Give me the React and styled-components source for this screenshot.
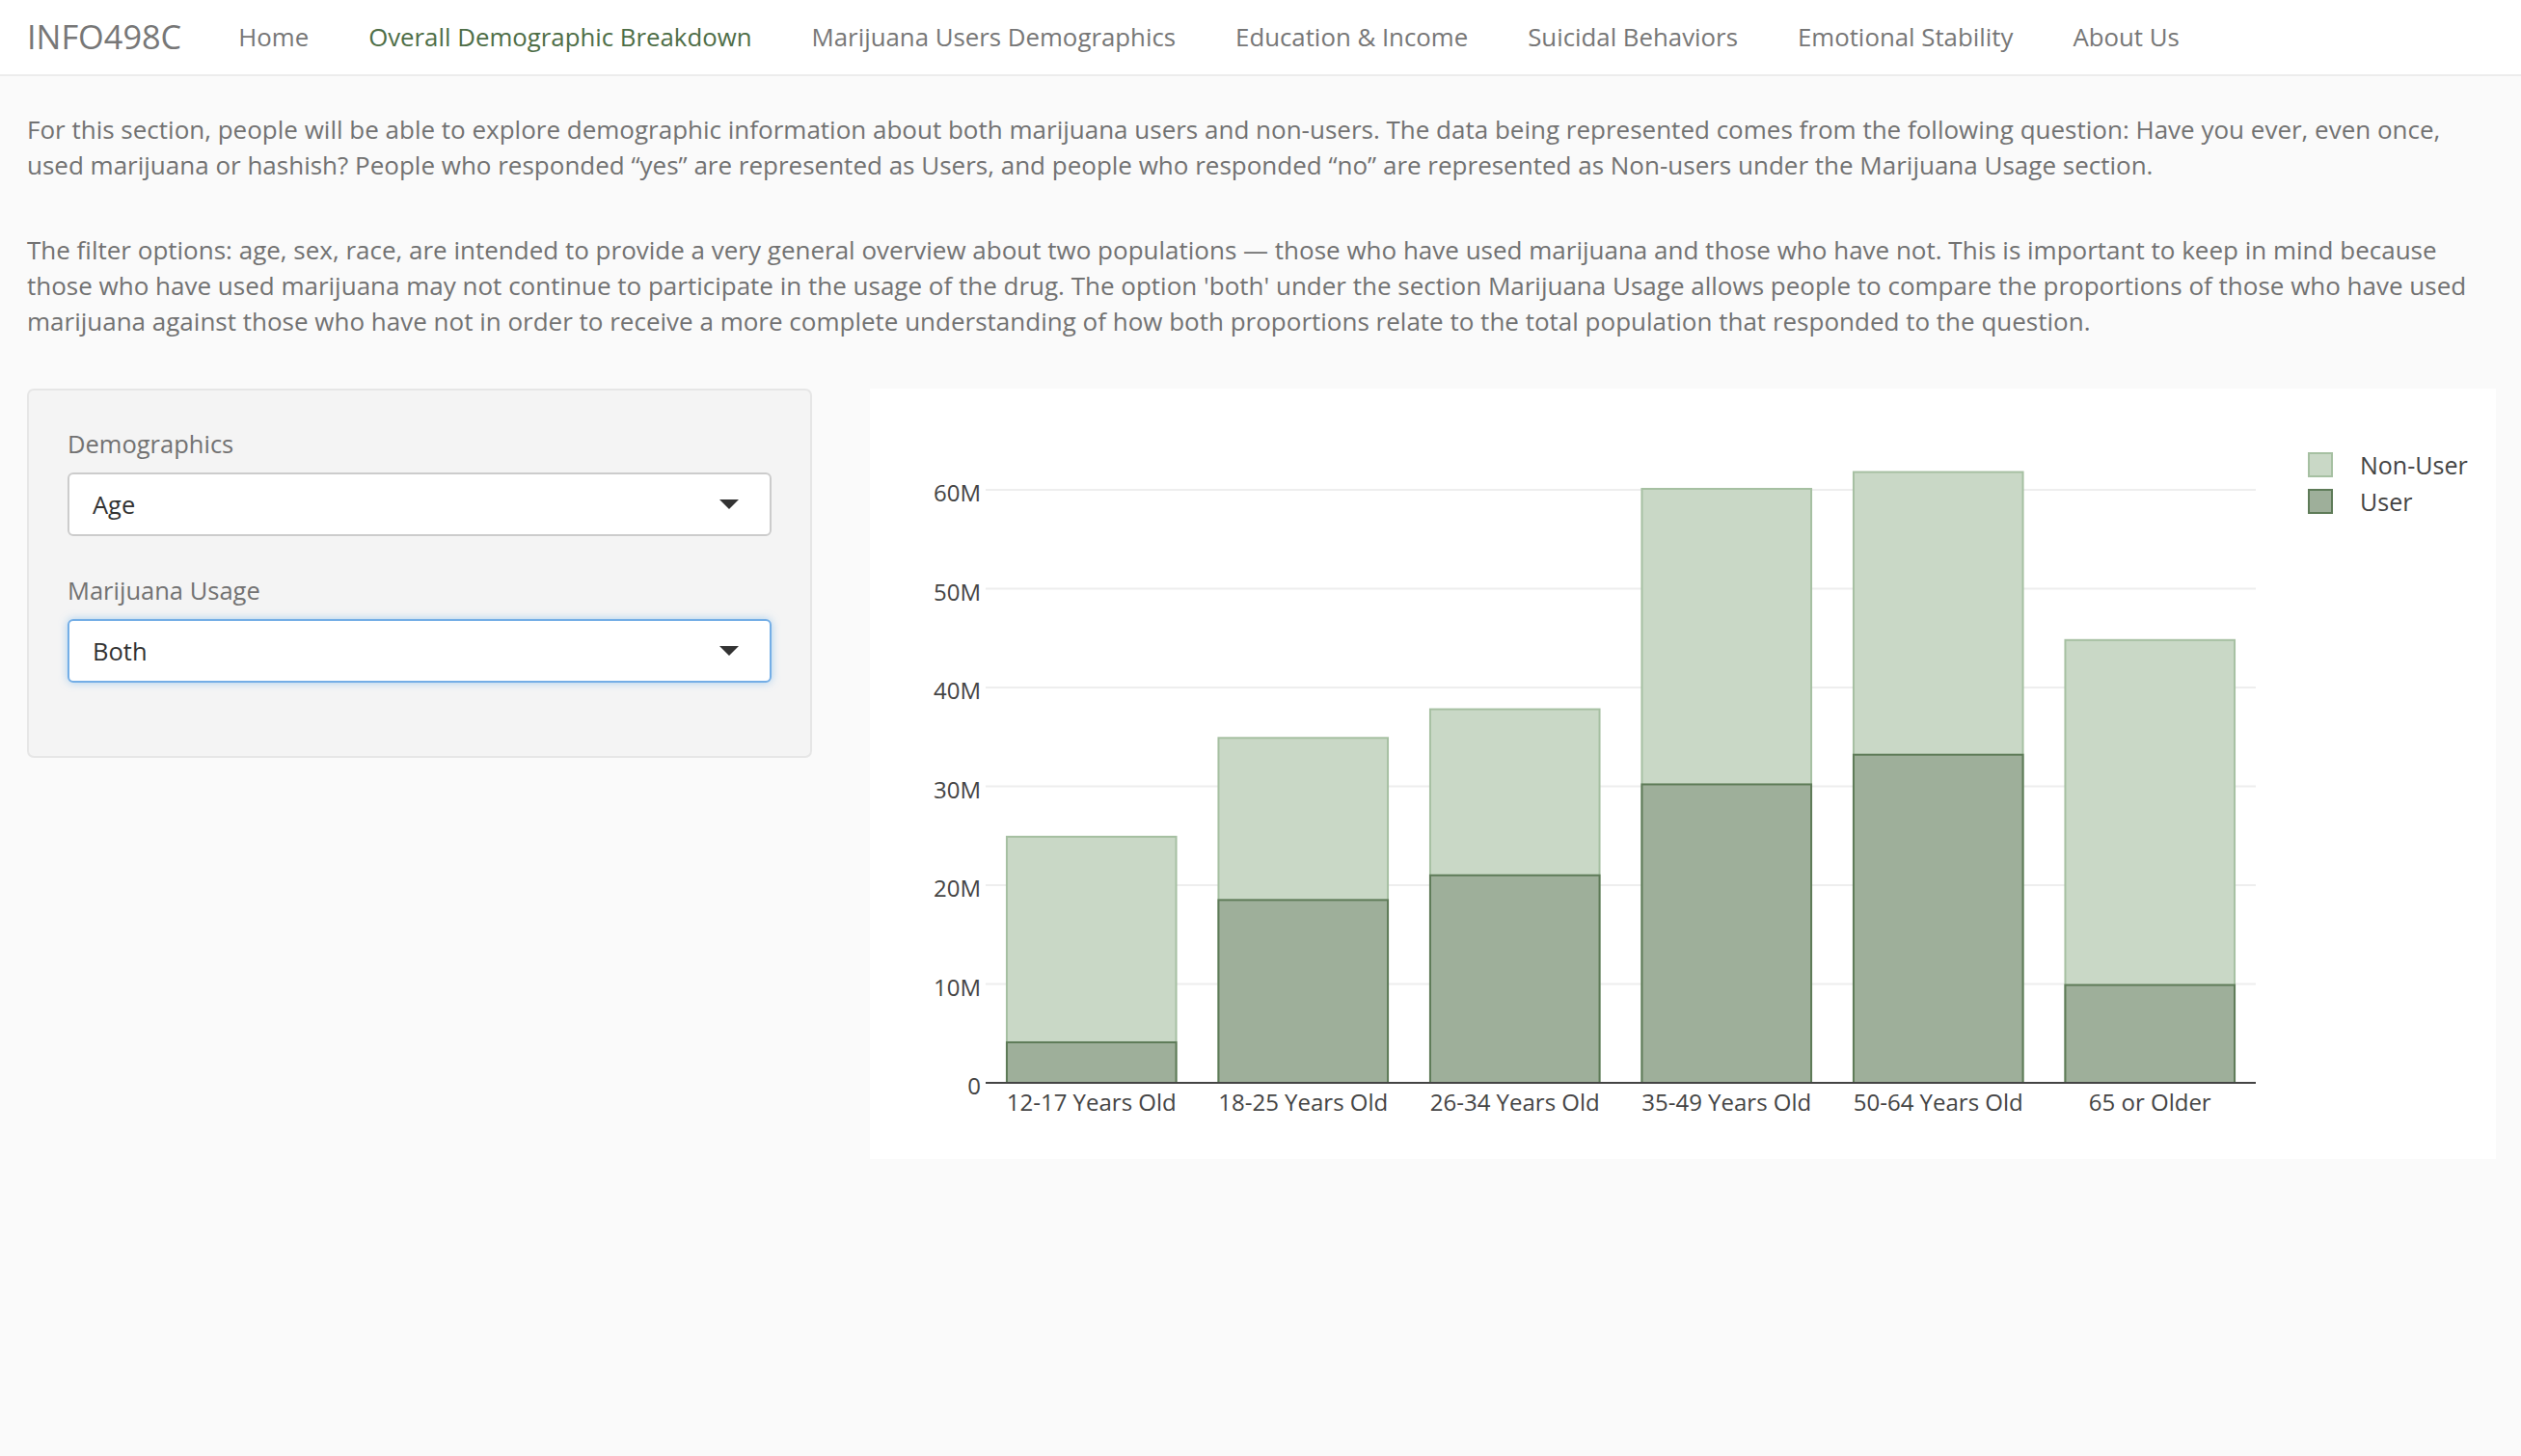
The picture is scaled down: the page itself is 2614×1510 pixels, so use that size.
import styled, { createGlobalStyle } from "styled-components";

const GlobalStyle = createGlobalStyle`
  body {
    margin: 0;
    background: #fafafa;
    font-family: "Open Sans", "Liberation Sans", sans-serif;
    color: #727272;
  }
`;

const links = [
  "Home",
  "Overall Demographic Breakdown",
  "Marijuana Users Demographics",
  "Education & Income",
  "Suicidal Behaviors",
  "Emotional Stability",
  "About Us",
];

const categories = [
  "12-17 Years Old",
  "18-25 Years Old",
  "26-34 Years Old",
  "35-49 Years Old",
  "50-64 Years Old",
  "65 or Older",
];
const nonUsers = [24.9, 34.9, 37.8, 60.1, 61.8, 44.8];
const users = [4.1, 18.5, 21.0, 30.2, 33.2, 9.9];

// plot geometry, relative to the white chart box
const X0 = 120;
const X1 = 1437;
const Y0 = 720;
const PER_M = 10.25;

export default function App() {
  return (
    <>
      <GlobalStyle />
      <Navbar>
        <Brand>INFO498C</Brand>
        {links.map((l, i) => (
          <NavItem key={l} $active={i === 1}>
            {l}
          </NavItem>
        ))}
      </Navbar>
      <Intro>
        <p>
          For this section, people will be able to explore demographic
          information about both marijuana users and non-users. The data being
          represented comes from the following question: Have you ever, even
          once, used marijuana or hashish? People who responded “yes” are
          represented as Users, and people who responded “no” are represented
          as Non-users under the Marijuana Usage section.
        </p>
        <p>
          The filter options: age, sex, race, are intended to provide a very
          general overview about two populations — those who have used
          marijuana and those who have not. This is important to keep in mind
          because those who have used marijuana may not continue to participate
          in the usage of the drug. The option 'both' under the section
          Marijuana Usage allows people to compare the proportions of those who
          have used marijuana against those who have not in order to receive a
          more complete understanding of how both proportions relate to the
          total population that responded to the question.
        </p>
      </Intro>
      <Row>
        <Well>
          <Field>
            <Label>Demographics</Label>
            <Select>
              <span>Age</span>
              <Caret />
            </Select>
          </Field>
          <Field>
            <Label>Marijuana Usage</Label>
            <Select $focused>
              <span>Both</span>
              <Caret />
            </Select>
          </Field>
        </Well>
        <ChartBox>
          <BarChart />
        </ChartBox>
      </Row>
    </>
  );
}

function BarChart() {
  const band = (X1 - X0) / categories.length;
  const barW = band * 0.8;
  const ticks = [0, 10, 20, 30, 40, 50, 60];
  return (
    <svg width="100%" height="100%" viewBox="0 0 1686 799">
      {ticks.slice(1).map((t) => (
        <line
          key={t}
          x1={X0}
          x2={X1}
          y1={Y0 - t * PER_M}
          y2={Y0 - t * PER_M}
          stroke="#eeeeee"
          strokeWidth="2"
        />
      ))}
      {ticks.map((t) => (
        <text
          key={t}
          x={X0 - 5}
          y={Y0 - t * PER_M + 12}
          textAnchor="end"
          fontSize="24"
          fill="#444"
        >
          {t === 0 ? "0" : `${t}M`}
        </text>
      ))}
      {categories.map((c, i) => {
        const x = X0 + i * band + (band - barW) / 2;
        const nh = nonUsers[i] * PER_M;
        const uh = users[i] * PER_M;
        return (
          <g key={c}>
            <rect
              x={x}
              y={Y0 - nh}
              width={barW}
              height={nh}
              fill="#c9d8c6"
              stroke="#a6c0a2"
              strokeWidth="2"
            />
            <rect
              x={x}
              y={Y0 - uh}
              width={barW}
              height={uh}
              fill="#9eaf9a"
              stroke="#5e7b58"
              strokeWidth="2"
            />
            <text
              x={x + barW / 2}
              y={Y0 + 29}
              textAnchor="middle"
              fontSize="24"
              fill="#444"
            >
              {c}
            </text>
          </g>
        );
      })}
      <line x1={X0} x2={X1} y1={Y0} y2={Y0} stroke="#444" strokeWidth="2" />
      <rect x="1492" y="67" width="24" height="24" fill="#c9d8c6" stroke="#a6c0a2" strokeWidth="2" />
      <text x="1545" y="89" fontSize="25" fill="#444">Non-User</text>
      <rect x="1492" y="105" width="24" height="24" fill="#9eaf9a" stroke="#5e7b58" strokeWidth="2" />
      <text x="1545" y="127" fontSize="25" fill="#444">User</text>
    </svg>
  );
}

const Navbar = styled.nav`
  display: flex;
  align-items: center;
  height: 75px;
  padding: 0 28px 2px;
  background: #ffffff;
  border-bottom: 2px solid #ececec;
`;

const Brand = styled.span`
  font-size: 34.3px;
  color: #777777;
  margin-right: 28px;
`;

const NavItem = styled.a`
  padding: 0 31px;
  font-size: 25.8px;
  color: ${({ $active }) => ($active ? "#4e6e47" : "#777777")};
  text-decoration: none;
  cursor: pointer;
`;

const Intro = styled.div`
  padding: 37px 40px 0 28px;
  p {
    margin: 0 0 51px;
    font-size: 26px;
    line-height: 37px;
  }
`;

const Row = styled.div`
  display: flex;
  align-items: flex-start;
  gap: 60px;
  padding: 0 26px 0 28px;
  margin-top: 1px;
`;

const Well = styled.div`
  box-sizing: border-box;
  width: 814px;
  height: 383px;
  padding: 37px 40px 40px;
  background: #f4f4f4;
  border: 2px solid #e6e6e6;
  border-radius: 7px;
`;

const Field = styled.div`
  margin-bottom: 38px;
`;

const Label = styled.div`
  font-size: 25.5px;
  line-height: 36px;
  margin-bottom: 12px;
  color: #727272;
`;

const Select = styled.div`
  box-sizing: border-box;
  height: 66px;
  display: flex;
  align-items: center;
  justify-content: space-between;
  padding: 0 32px 0 24px;
  background: #ffffff;
  border: 2px solid ${({ $focused }) => ($focused ? "#74aee6" : "#cccccc")};
  border-radius: 6px;
  box-shadow: ${({ $focused }) =>
    $focused ? "0 0 8px rgba(102, 175, 233, 0.55)" : "none"};
  font-size: 25.5px;
  color: #333333;
`;

const Caret = styled.span`
  width: 0;
  height: 0;
  border-left: 10px solid transparent;
  border-right: 10px solid transparent;
  border-top: 10px solid #333333;
`;

const ChartBox = styled.div`
  flex: 1;
  height: 799px;
  background: #ffffff;
`;
